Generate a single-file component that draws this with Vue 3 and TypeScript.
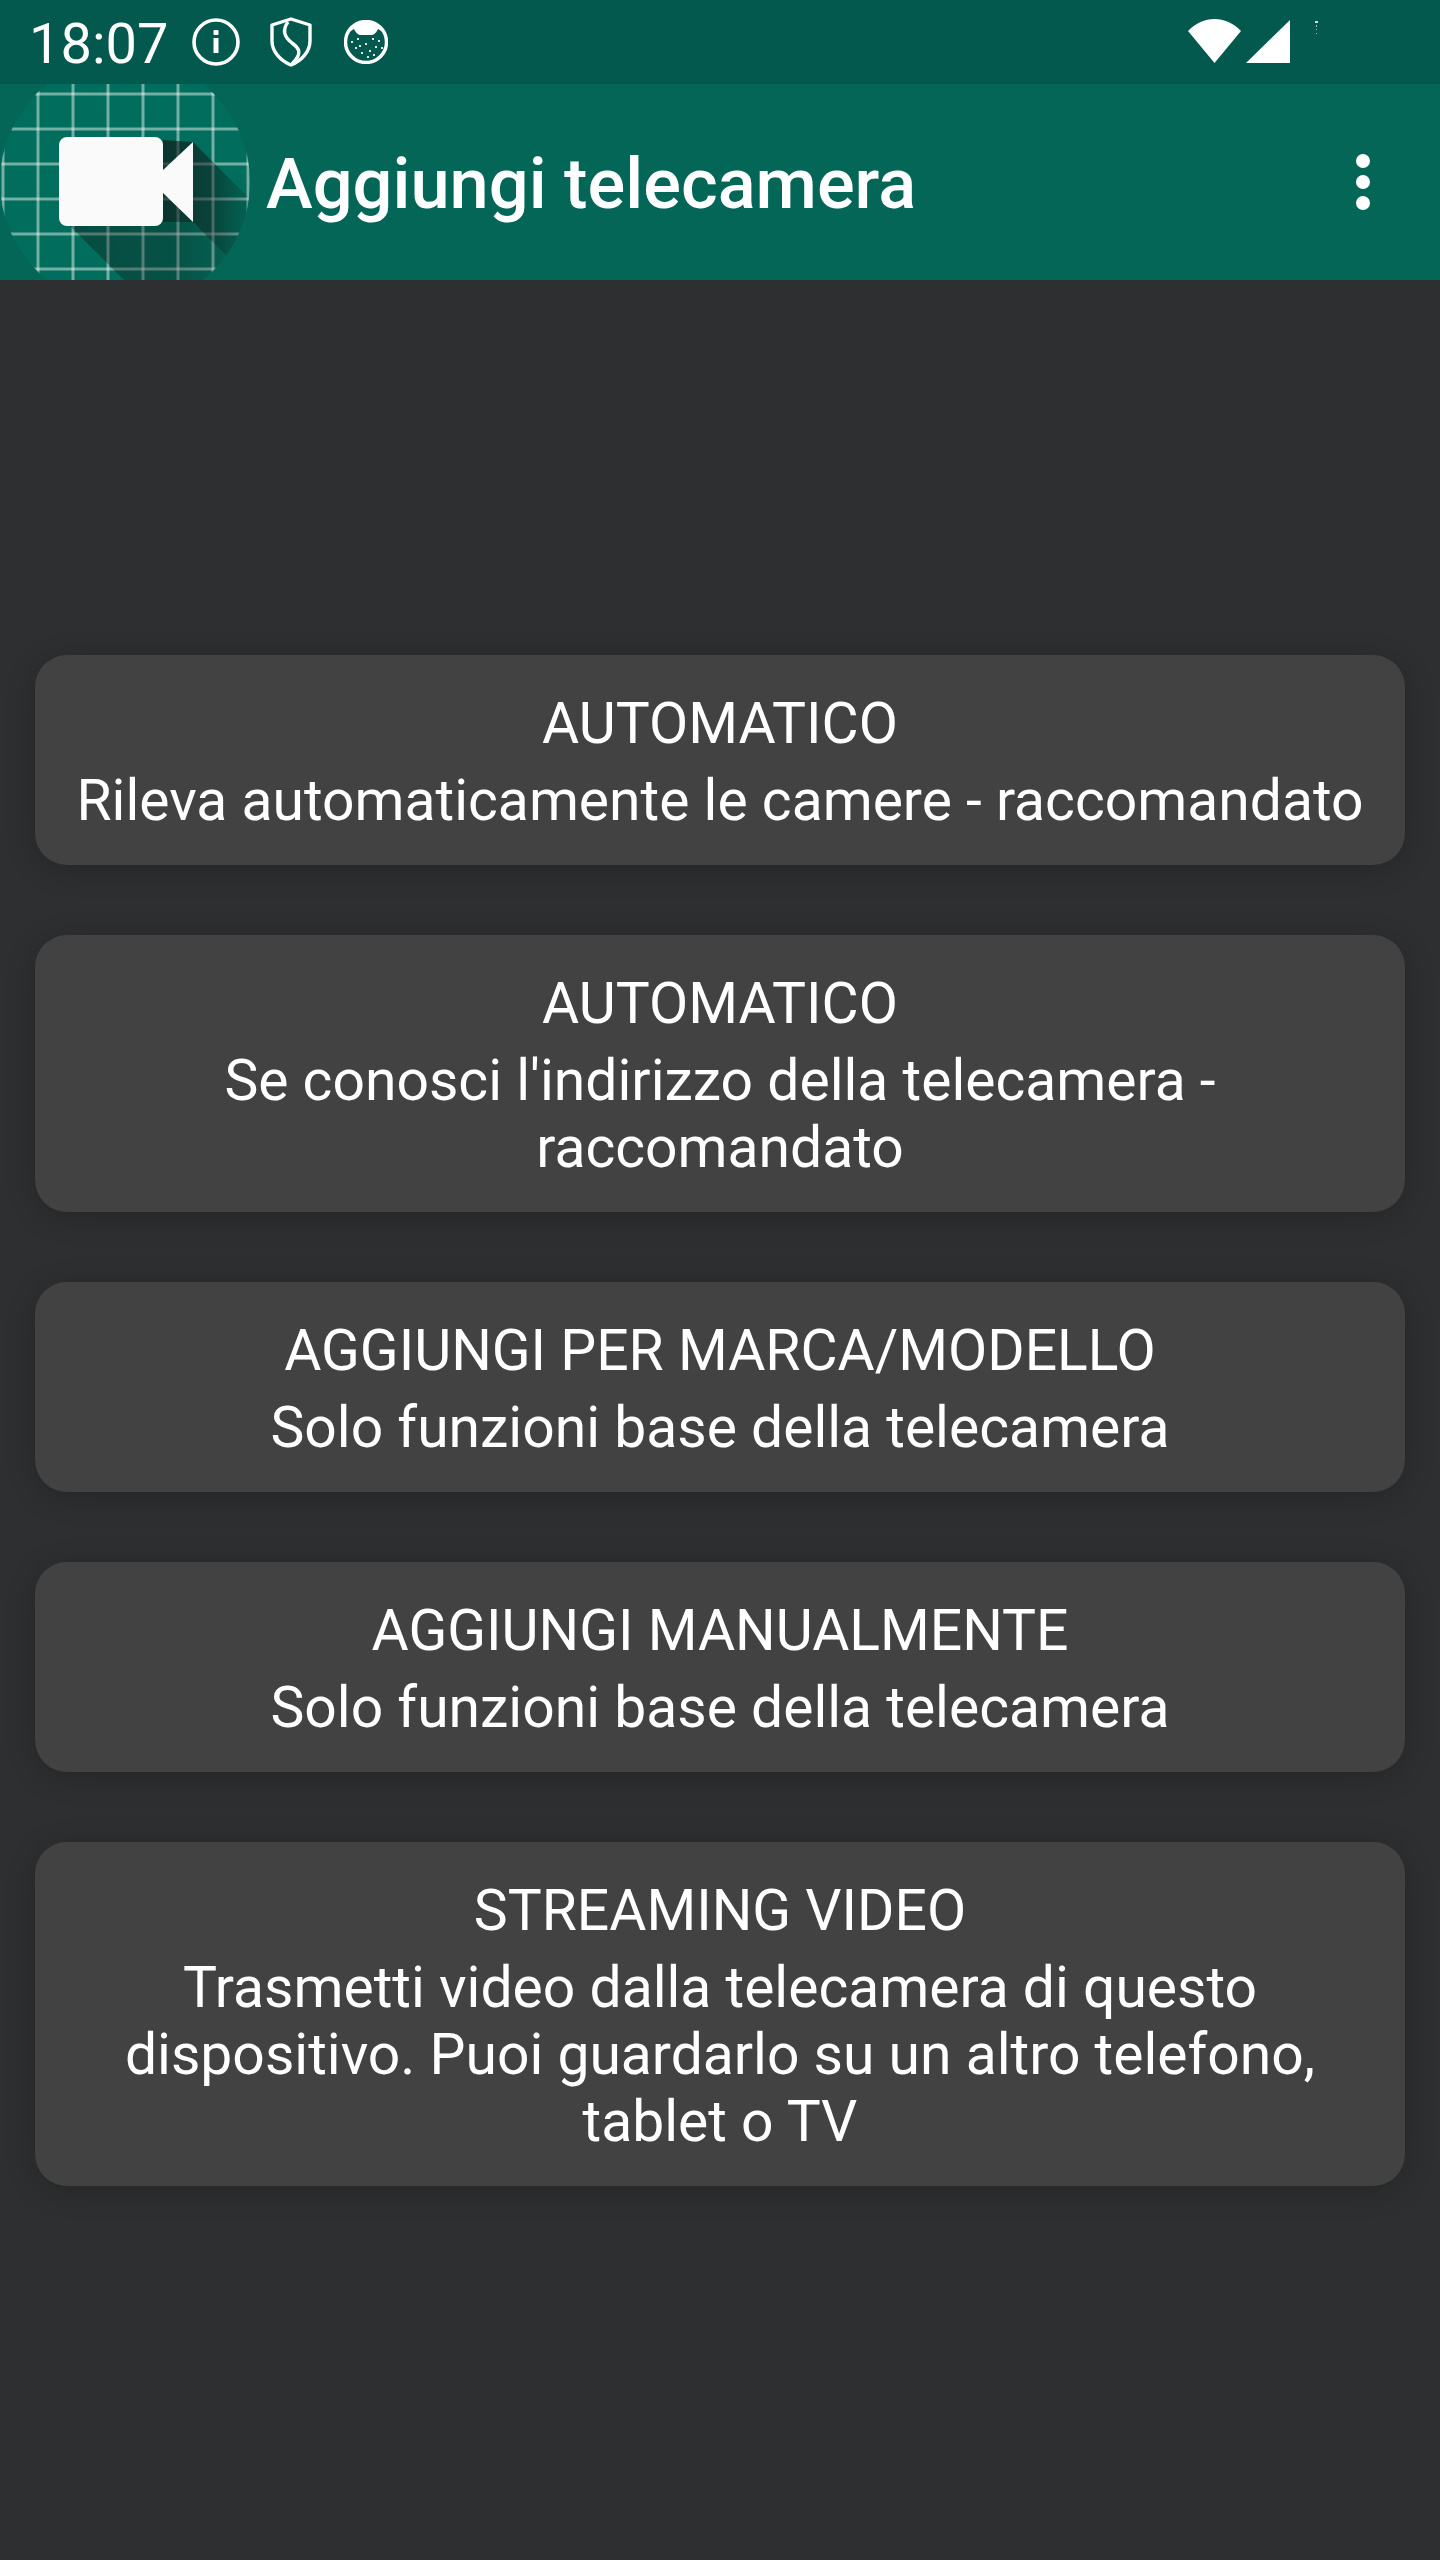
<script setup lang="ts">
interface Option { title: string; text: string }
const options: Option[] = [
  { title: 'AUTOMATICO', text: 'Rileva automaticamente le camere - raccomandato' },
  { title: 'AUTOMATICO', text: "Se conosci l'indirizzo della telecamera - raccomandato" },
  { title: 'AGGIUNGI PER MARCA/MODELLO', text: 'Solo funzioni base della telecamera' },
  { title: 'AGGIUNGI MANUALMENTE', text: 'Solo funzioni base della telecamera' },
  { title: 'STREAMING VIDEO', text: 'Trasmetti video dalla telecamera di questo dispositivo. Puoi guardarlo su un altro telefono, tablet o TV' },
]
const gridX = [3, 38, 73, 108, 143, 178, 213, 248]
const gridY = [94, 129, 164, 199, 234, 269]
const specks = [[354,41],[358,47],[360,38],[364,52],[368,43],[372,50],[375,38],[378,46],[381,40],[370,56],[362,45],[376,54],[384,47]]
</script>

<template>
  <div class="screen">
    <div class="status">
      <span class="time">18:07</span>
      <svg class="st-icon first" viewBox="0 0 48 48" width="48" height="48">
        <circle cx="24" cy="24" r="22" fill="none" stroke="#fff" stroke-width="3.6" />
        <rect x="21.5" y="20" width="5" height="15" fill="#fff" />
        <rect x="21.5" y="12" width="5" height="5" rx="1" fill="#fff" />
      </svg>
      <svg class="st-icon" viewBox="0 0 44 50" width="44" height="50">
        <path d="M22 2 L41 8 V24 C41 35 32 44 22 48 C12 44 3 35 3 24 V8 Z" fill="none" stroke="#fff" stroke-width="3.4" stroke-linejoin="round" />
        <path d="M19 5 C13 13 15 20 23 26 C30 31 34 36 23 47" fill="none" stroke="#fff" stroke-width="3.4" />
      </svg>
      <svg class="st-icon" viewBox="347 20 44 44" width="44" height="44">
        <circle cx="369" cy="42" r="20.5" fill="#03594d" stroke="#fff" stroke-width="3.4" />
        <path d="M352 32 L357 29 C359 33 361 35 364 35 H374 C377 35 379 33 381 29 L386 32 L382 26 C375 21 363 21 356 26 Z" fill="#fff" />
        <rect v-for="(s, i) in specks" :key="i" :x="s[0]" :y="s[1]" width="2" height="2" fill="#fff" opacity="0.85" />
      </svg>
      <span class="spacer"></span>
      <svg class="wifi" viewBox="0 0 53 44" width="53" height="44">
        <path d="M0 12 C15 -4 38 -4 53 12 L26.5 44 Z" fill="#fff" />
      </svg>
      <svg class="signal" viewBox="0 0 44 43" width="44" height="43">
        <path d="M0 43 L44 0 V43 Z" fill="#fff" />
      </svg>
      <svg class="battery" viewBox="0 0 3 14" width="3" height="14">
        <rect x="0" y="0" width="3" height="2" fill="#cfe0dc" />
        <rect x="1" y="4" width="1" height="2" fill="#9fc0b8" />
        <rect x="1" y="8" width="1" height="1" fill="#9fc0b8" />
        <rect x="1" y="12" width="1" height="1" fill="#9fc0b8" />
      </svg>
    </div>

    <header class="toolbar">
      <svg class="logo" viewBox="0 84 252 196" width="252" height="196">
        <defs>
          <clipPath id="disc"><circle cx="125" cy="182" r="125" /></clipPath>
          <linearGradient id="wedge" gradientUnits="userSpaceOnUse" x1="165" y1="0" x2="250" y2="0">
            <stop offset="0" stop-color="#111" stop-opacity="0.62" />
            <stop offset="0.5" stop-color="#111" stop-opacity="0.48" />
            <stop offset="1" stop-color="#111" stop-opacity="0.1" />
          </linearGradient>
          <linearGradient id="body" gradientUnits="userSpaceOnUse" x1="70" y1="0" x2="240" y2="0">
            <stop offset="0" stop-color="#111" stop-opacity="0.36" />
            <stop offset="0.6" stop-color="#111" stop-opacity="0.3" />
            <stop offset="1" stop-color="#111" stop-opacity="0.1" />
          </linearGradient>
        </defs>
        <g clip-path="url(#disc)">
          <rect x="0" y="50" width="252" height="260" fill="#016d5c" />
          <g stroke="#fff" stroke-opacity="0.45" stroke-width="3">
            <line v-for="x in gridX" :key="'v' + x" :x1="x" :x2="x" y1="50" y2="310" />
            <line v-for="y in gridY" :key="'h' + y" x1="0" x2="252" :y1="y" :y2="y" />
          </g>
          <path d="M66 222 L126 282 H253 L193 222 Z" fill="url(#body)" />
          <path d="M163 140 L193 142 L333 282 H253 L193 222 H163 Z" fill="url(#wedge)" />
        </g>
        <path d="M67 137 H155 A8 8 0 0 1 163 145 V170 L193 142 V222 L163 193 V218 A8 8 0 0 1 155 226 H67 A8 8 0 0 1 59 218 V145 A8 8 0 0 1 67 137 Z" fill="#fafafa" />
      </svg>
      <h1 class="title">Aggiungi telecamera</h1>
      <div class="menu"><i></i><i></i><i></i></div>
    </header>

    <main class="content">
      <button v-for="(o, i) in options" :key="i" class="card" type="button">
        <span class="card-title">{{ o.title }}</span>
        <span class="card-text">{{ o.text }}</span>
      </button>
    </main>
  </div>
</template>

<style>
html, body { margin: 0; background: #2e2f31; }
</style>

<style scoped>
.screen {
  width: 1440px;
  height: 2560px;
  background: #2e2f31;
  font-family: Roboto, "Liberation Sans", sans-serif;
  color: #fff;
  overflow: hidden;
}
.status {
  height: 84px;
  background: #03594d;
  display: flex;
  align-items: center;
  padding-left: 29px;
  box-sizing: border-box;
}
.time { font-size: 56px; line-height: 84px; width: 163px; padding-top: 4px; }
.st-icon { display: block; margin-right: 31px; }
.st-icon.first { margin-right: 29px; }
.spacer { flex: 1; }
.wifi { display: block; margin-top: -3px; }
.signal { display: block; margin-left: 5px; margin-top: -1px; }
.battery { display: block; margin-left: 25px; margin-right: 122px; margin-top: -28px; }
.toolbar {
  height: 196px;
  background: #046657;
  display: flex;
  align-items: center;
}
.logo { display: block; flex: none; }
.title {
  margin: 4px 0 0 14px;
  font-size: 70.4px;
  font-weight: 500;
  line-height: 192px;
  flex: 1;
}
.menu {
  display: flex;
  flex-direction: column;
  gap: 7px;
  margin-right: 70px;
}
.menu i { display: block; width: 14px; height: 14px; border-radius: 50%; background: #fff; }
.content {
  padding: 375px 35px 0;
  display: flex;
  flex-direction: column;
  gap: 70px;
}
.card {
  display: flex;
  flex-direction: column;
  align-items: center;
  border: 0;
  margin: 0;
  width: 100%;
  padding: 35px 35px 31.5px;
  background: #424242;
  border-radius: 32px;
  box-shadow: 0 5px 30px rgba(0, 0, 0, 0.2);
  color: #fff;
  font-family: inherit;
  text-align: center;
}
.card-title { font-size: 57px; line-height: 67px; margin-bottom: 9.5px; }
.card-text { font-size: 57px; line-height: 67px; }
</style>
